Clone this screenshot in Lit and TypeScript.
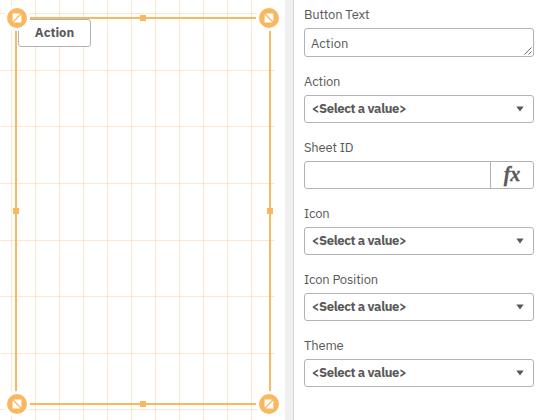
import { LitElement, html, svg, css } from "lit";
import { customElement, property } from "lit/decorators.js";

@customElement("resize-grip")
class ResizeGrip extends LitElement {
  @property({ type: Boolean, reflect: true }) flip = false;
  static styles = css`
    :host { display: block; width: 26px; height: 26px; }
    svg { display: block; }
    :host([flip]) svg { transform: scaleX(-1); }
  `;
  render() {
    return html`<svg width="26" height="26" viewBox="0 0 26 26">
      <circle cx="13" cy="13" r="13" fill="#fff" />
      <circle cx="13" cy="13" r="10" fill="#f9b760" />
      <path d="M8.6 8.6h7.9L8.6 16.5zM17.4 9.5v7.9H9.5z" fill="#fff" />
    </svg>`;
  }
}

@customElement("sheet-canvas")
class SheetCanvas extends LitElement {
  static styles = css`
    :host { display: block; position: relative; width: 285px; height: 420px; background: #fff; overflow: hidden; }
    .grid { display: block; }
    .frame { position: absolute; left: 15px; top: 17px; width: 256px; height: 388px; box-sizing: border-box; border: 2px solid #f9b760; }
    .action { position: absolute; left: 18px; top: 19px; width: 73px; height: 28px; box-sizing: border-box; padding: 0; border: 1px solid #b3b3b3; border-radius: 3px; background: #fff; color: #595959; font: bold 13px/26px "IBM Plex Sans", "Noto Sans", sans-serif; text-align: center; }
    .mark { position: absolute; width: 6px; height: 6px; background: #f9b760; }
    .n { left: 140px; top: 15px; }
    .s { left: 140px; top: 401px; }
    .w { left: 13px; top: 208px; }
    .e { left: 267px; top: 208px; }
    resize-grip { position: absolute; }
    .nw { left: 4px; top: 5px; }
    .ne { left: 256px; top: 5px; }
    .sw { left: 4px; top: 391px; }
    .se { left: 256px; top: 391px; }
  `;
  render() {
    const cols = Array.from({ length: 11 }, (_, i) => 11 + i * 24);
    const rows = [13, 70, 126, 183, 240, 296, 353, 409];
    return html`
      <svg class="grid" width="285" height="420">
        ${cols.map((x) => svg`<rect x=${x} y="0" width="1" height="420" fill="#fbe6d6" />`)}
        ${rows.map((y) => svg`<rect x="0" y=${y} width="275" height="1" fill="#f9a040" fill-opacity=".25" />`)}
      </svg>
      <button class="action">Action</button>
      <div class="frame"></div>
      <i class="mark n"></i><i class="mark s"></i><i class="mark w"></i><i class="mark e"></i>
      <resize-grip class="nw"></resize-grip>
      <resize-grip class="ne" flip></resize-grip>
      <resize-grip class="sw" flip></resize-grip>
      <resize-grip class="se"></resize-grip>
    `;
  }
}

@customElement("app-root")
class AppRoot extends LitElement {
  static styles = css`
    :host { display: flex; width: 541px; height: 420px; overflow: hidden; background: #fff; color: #595959; font: 13px/18px "IBM Plex Sans", "Noto Sans", sans-serif; }
    .gutter { width: 8px; background: #f0f0f0; border-right: 1px solid #d9d9d9; }
    .panel { display: flex; flex-direction: column; gap: 14px; padding: 6px 7px 0 10px; width: 230px; }
    .field { display: flex; flex-direction: column; gap: 3px; height: 52px; }
    .field.first { height: 53px; }
    .label { height: 19px; white-space: nowrap; letter-spacing: -.18px; }
    .box { display: flex; align-items: center; justify-content: space-between; box-sizing: border-box; width: 230px; height: 28px; border: 1px solid #b3b3b3; border-radius: 3px; padding: 0 9px 0 6.5px; }
    .text { position: relative; height: 29px; padding: 3px 0 0 6px; }
    .text svg { position: absolute; right: 1px; bottom: 1px; }
    .value { font-weight: bold; white-space: nowrap; letter-spacing: -.36px; }
    .expr { padding: 0; justify-content: flex-end; }
    .fx { width: 42px; height: 26px; border-left: 1px solid #b3b3b3; text-align: center; font: italic bold 20px/25px "Liberation Serif", serif; -webkit-text-stroke: .3px #595959; }
  `;
  select(label: string) {
    return html`<div class="field">
      <div class="label">${label}</div>
      <div class="box"><span class="value">&lt;Select a value&gt;</span>
        <svg width="8" height="6"><path d="M.3.5h7.4L4 5.5z" fill="#595959" /></svg></div>
    </div>`;
  }
  render() {
    return html`
      <sheet-canvas></sheet-canvas>
      <div class="gutter"></div>
      <div class="panel">
        <div class="field first"><div class="label">Button Text</div>
          <div class="box text">Action<svg width="8" height="8"><path d="M.5 7.5l7-7M4.5 7.5l3-3" stroke="#595959" stroke-width=".9" /></svg></div></div>
        ${this.select("Action")}
        <div class="field"><div class="label">Sheet ID</div>
          <div class="box expr"><div class="fx">fx</div></div></div>
        ${this.select("Icon")}${this.select("Icon Position")}${this.select("Theme")}
      </div>
    `;
  }
}
